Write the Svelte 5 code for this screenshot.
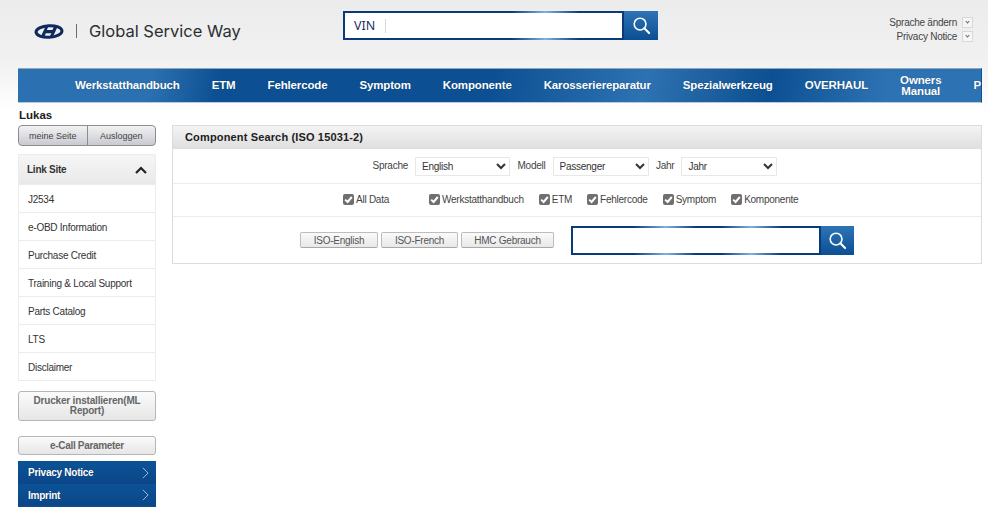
<script>
	const navItems = [
		['Werkstatthandbuch'],
		['ETM'],
		['Fehlercode'],
		['Symptom'],
		['Komponente'],
		['Karosseriereparatur'],
		['Spezialwerkzeug'],
		['OVERHAUL'],
		['Owners', 'Manual'],
		['P']
	];
	const links = [
		'J2534',
		'e-OBD Information',
		'Purchase Credit',
		'Training & Local Support',
		'Parts Catalog',
		'LTS',
		'Disclaimer'
	];
	const checks = [
		{ label: 'All Data', wide: true },
		{ label: 'Werkstatthandbuch' },
		{ label: 'ETM' },
		{ label: 'Fehlercode' },
		{ label: 'Symptom' },
		{ label: 'Komponente' }
	];
</script>

{#snippet searchIcon()}
	<svg viewBox="0 0 20 20" width="19" height="19" fill="none" stroke="#fff" aria-hidden="true">
		<circle cx="8.5" cy="8.5" r="6.2" stroke-width="1.7" />
		<path d="M13 13l5 5" stroke-width="2.2" stroke-linecap="round" />
	</svg>
{/snippet}

<div class="page">
	<header class="top">
		<div class="brand">
			<svg class="logo" viewBox="0 0 30 15" width="30" height="15" aria-hidden="true">
				<ellipse cx="15" cy="7.5" rx="13" ry="5.8" fill="none" stroke="#0f2a5e" stroke-width="3" transform="rotate(-3 15 7.5)" />
				<path d="M12 1.6l-5.6 11.8 3.4.5 2-4.6h5.6l-2.4 4.7 3.6-.6 5.4-11.6-3.5-.4-2.1 4.7h-5.6l2.2-4.9z" fill="#0f2a5e" />
			</svg>
			<span class="divider"></span>
			<span class="brand-name">Global Service Way</span>
		</div>
		<div class="vin-search">
			<div class="vin-field">
				<span class="vin-label">VIN</span>
			</div>
			<button class="search-btn vin-btn" aria-label="Search">{@render searchIcon()}</button>
		</div>
		<div class="utils">
			<div class="util">Sprache ändern <span class="caret"><i></i></span></div>
			<div class="util">Privacy Notice <span class="caret"><i></i></span></div>
		</div>
	</header>

	<nav class="gnb">
		{#each navItems as item}
			<a href="#top" class="gnb-item">
				{#each item as line}<span>{line}</span>{/each}
			</a>
		{/each}
	</nav>

	<div class="content">
		<aside class="side">
			<div class="user">Lukas</div>
			<div class="user-btns">
				<button>meine Seite</button>
				<button>Ausloggen</button>
			</div>

			<section class="links">
				<div class="links-head">
					<span>Link Site</span>
					<svg viewBox="0 0 12 8" width="12" height="8" fill="none" stroke="#222" stroke-width="2.2" aria-hidden="true"><path d="M1 7l5-5 5 5" /></svg>
				</div>
				{#each links as link}
					<a href="#top" class="link-row">{link}</a>
				{/each}
			</section>

			<button class="side-btn printer">Drucker installieren(ML Report)</button>
			<button class="side-btn ecall">e-Call Parameter</button>

			<div class="blue-links">
				<a href="#top">Privacy Notice
					<svg viewBox="0 0 8 14" width="7" height="12" fill="none" stroke="#b8d0e8" aria-hidden="true"><path d="M1 1l6 6-6 6" /></svg>
				</a>
				<a href="#top">Imprint
					<svg viewBox="0 0 8 14" width="7" height="12" fill="none" stroke="#b8d0e8" aria-hidden="true"><path d="M1 1l6 6-6 6" /></svg>
				</a>
			</div>
		</aside>

		<main class="panel">
			<h2>Component Search (ISO 15031-2)</h2>

			<div class="row filters">
				<label><span>Sprache</span>
					<select class="w95"><option>English</option></select>
				</label>
				<label><span>Modell</span>
					<select class="w96"><option>Passenger</option></select>
				</label>
				<label><span>Jahr</span>
					<select class="w96"><option>Jahr</option></select>
				</label>
			</div>

			<div class="row checks">
				{#each checks as check}
					<label class="check" class:wide={check.wide}>
						<span class="box">
							<svg viewBox="0 0 11 11" width="11" height="11" fill="none" stroke="#fff" stroke-width="2" aria-hidden="true"><path d="M2.2 5.6l2.4 2.4 4.2-5" /></svg>
						</span>
						{check.label}
					</label>
				{/each}
			</div>

			<div class="row actions">
				<div class="iso-btns">
					<button class="w78">ISO-English</button>
					<button class="w77">ISO-French</button>
					<button class="w93">HMC Gebrauch</button>
				</div>
				<div class="term-search">
					<div class="term-field"></div>
					<button class="search-btn term-btn" aria-label="Search">{@render searchIcon()}</button>
				</div>
			</div>
		</main>
	</div>
</div>

<style>
	:global(body) {
		margin: 0;
		background: #fff;
	}

	.page {
		width: 988px;
		height: 520px;
		overflow: hidden;
		font-family: "Liberation Sans", Arial, sans-serif;
		font-size: 10px;
		letter-spacing: -0.25px;
		color: #333;
		background: linear-gradient(#ececec 0, #f1f1f1 60px, #fff 112px) no-repeat;
	}

	button {
		font-family: inherit;
		letter-spacing: inherit;
		cursor: pointer;
	}

	/* header */
	.top {
		display: grid;
		grid-template-columns: 343px 315px 1fr;
		height: 68px;
		box-sizing: border-box;
	}

	.brand {
		display: flex;
		align-items: center;
		height: 62px;
		padding-left: 34px;
	}

	.logo {
		flex: none;
	}

	.divider {
		width: 1px;
		height: 14px;
		margin: 0 12px 0 12px;
		background: #5f7284;
	}

	.brand-name {
		font-family: Inter, "Noto Sans", sans-serif;
		font-size: 16.5px;
		letter-spacing: 0;
		color: #2b2f33;
		white-space: nowrap;
	}

	.vin-search {
		display: flex;
		height: 29px;
		margin-top: 11px;
	}

	.vin-field {
		flex: 1;
		display: flex;
		align-items: center;
		box-sizing: border-box;
		border: 2px solid #0b3f80;
		border-image: linear-gradient(90deg, #0b3a7c 0, #0b3a7c 60%, #7fb2e0 72%, #0b3a7c 84%) 2;
		background: #fff;
		padding-left: 9px;
	}

	.vin-label {
		padding-right: 10px;
		border-right: 1px solid #d8d8d8;
		font-family: "Noto Sans", sans-serif;
		font-size: 12.5px;
		letter-spacing: 0;
		line-height: 14px;
		color: #1b2f66;
	}

	.search-btn {
		display: flex;
		align-items: center;
		justify-content: center;
		flex: none;
		padding: 0;
		border: 0;
		background: linear-gradient(#2d74b6, #0b4f92);
	}

	.vin-btn {
		width: 34px;
	}

	.utils {
		padding: 15px 15px 0 0;
		text-align: right;
		color: #444;
	}

	.util {
		display: flex;
		align-items: center;
		justify-content: flex-end;
		gap: 5px;
		height: 14.5px;
	}

	.caret {
		display: flex;
		align-items: center;
		justify-content: center;
		width: 9px;
		height: 9px;
		border: 1px solid #d9d9d9;
		background: #f6f6f6;
	}

	.caret i {
		width: 2px;
		height: 2px;
		margin-top: -2px;
		border-right: 1px solid #666;
		border-bottom: 1px solid #666;
		transform: rotate(45deg);
	}

	/* main menu */
	.gnb {
		display: flex;
		align-items: center;
		gap: 32px;
		height: 35px;
		margin: 0 6px 0 18px;
		padding-left: 57px;
		overflow: hidden;
		white-space: nowrap;
		border-top: 1px solid #8fa6bd;
		border-bottom: 1px solid #b7cbdd;
		border-right: 1px solid #0c5093;
		box-sizing: border-box;
		background: linear-gradient(100deg, #2b70b0 0, #2b70b0 14%, #0c5093 21%, #0c5093 49%, #2d72b2 65%, #1d5f9f 72%, #0c5093 78%, #2d72b2 90%, #2d72b2 100%);
	}

	.gnb-item {
		display: flex;
		flex-direction: column;
		align-items: center;
		flex: none;
		color: #fff;
		font-size: 11.5px;
		font-weight: 700;
		line-height: 11px;
		letter-spacing: -0.145px;
		text-decoration: none;
		text-shadow: 0 0 1px rgba(0, 0, 0, 0.35);
	}

	/* body */
	.content {
		display: grid;
		grid-template-columns: 138px 810px;
		gap: 16px;
		padding-left: 18px;
	}

	.side {
		display: flex;
		flex-direction: column;
	}

	.user {
		height: 22px;
		padding-left: 1px;
		font-size: 11.5px;
		font-weight: 700;
		letter-spacing: 0;
		line-height: 24px;
		color: #1c1c1c;
	}

	.user-btns {
		display: flex;
		height: 21px;
		box-sizing: border-box;
		border: 1px solid #8b8d92;
		border-radius: 4px;
		overflow: hidden;
		background: linear-gradient(#f2f2f4, #c9cad0);
	}

	.user-btns button {
		flex: 1;
		padding: 0;
		border: 0;
		background: none;
		font-size: 9px;
		letter-spacing: 0;
		color: #444;
	}

	.user-btns button + button {
		border-left: 1px solid #8b8d92;
	}

	.links {
		margin-top: 8px;
		border: 1px solid #ececec;
		background: #fff;
	}

	.links-head {
		display: flex;
		align-items: center;
		justify-content: space-between;
		height: 29px;
		padding: 0 8px;
		background: linear-gradient(#f6f6f6, #e9e9eb);
		font-weight: 700;
		color: #333;
	}

	.link-row {
		display: flex;
		align-items: center;
		height: 26px;
		padding: 1px 0 0 9px;
		border-top: 1px solid #ececec;
		color: #333;
		text-decoration: none;
	}

	.side-btn {
		box-sizing: border-box;
		width: 138px;
		padding: 0 4px;
		border: 1px solid #b5b5b5;
		border-radius: 3px;
		background: linear-gradient(#fbfbfb, #e6e6e6);
		font-size: 10px;
		font-weight: 700;
		letter-spacing: -0.18px;
		line-height: 10px;
		color: #666;
	}

	.printer {
		height: 30px;
		margin-top: 10px;
	}

	.ecall {
		height: 19px;
		margin-top: 15px;
		letter-spacing: -0.32px;
	}

	.blue-links {
		margin-top: 6px;
		border: 1px solid #0b4f92;
		border-width: 1px 0;
	}

	.blue-links a {
		display: flex;
		align-items: center;
		justify-content: space-between;
		box-sizing: border-box;
		height: 22px;
		padding: 0 7px 1px 10px;
		background: linear-gradient(#0c5297, #0a4688);
		color: #fff;
		font-weight: 700;
		text-decoration: none;
		text-shadow: 0 0 1px rgba(0, 0, 0, 0.4);
	}

	.blue-links a + a {
		padding-bottom: 0;
	}

	.panel {
		align-self: start;
		height: 139px;
		margin-top: 22px;
		box-sizing: border-box;
		border: 1px solid #dcdcdc;
		background: #fff;
	}

	.panel h2 {
		margin: 0;
		height: 23px;
		padding-left: 12px;
		background: linear-gradient(#f4f4f4, #dedede);
		font-size: 11px;
		font-weight: 700;
		line-height: 23px;
		letter-spacing: 0.15px;
		color: #1c1c1c;
	}

	.row {
		display: flex;
		align-items: center;
		justify-content: center;
		box-sizing: border-box;
		border-top: 1px solid #ececec;
	}

	.filters {
		height: 34px;
		gap: 7.5px;
		border-top: 0;
		padding-right: 4px;
	}

	.filters label {
		display: flex;
		align-items: center;
		gap: 7px;
		color: #444;
	}

	.filters label span {
		margin-top: -2px;
	}

	.filters select {
		height: 19px;
		box-sizing: border-box;
		border: 1px solid #e8e8e8;
		border-radius: 0;
		background: #fff;
		padding: 0 0 0 2px;
		font-family: inherit;
		font-size: 10px;
		letter-spacing: -0.25px;
		color: #333;
	}

	.w95 {
		width: 95px;
	}

	.w96 {
		width: 96px;
	}

	.checks {
		height: 33px;
		justify-content: flex-start;
		gap: 15px;
		padding: 0 0 2px 170px;
	}

	.check {
		display: flex;
		align-items: center;
		gap: 2px;
		color: #444;
	}

	.check.wide {
		margin-right: 25px;
	}

	.box {
		display: flex;
		align-items: center;
		justify-content: center;
		width: 11px;
		height: 11px;
		border-radius: 2px;
		background: #6f6f6f;
	}

	.actions {
		height: 47px;
		justify-content: flex-start;
		gap: 17px;
		padding-left: 127px;
	}

	.iso-btns {
		display: flex;
		gap: 3px;
	}

	.iso-btns button {
		height: 16px;
		padding: 0;
		border: 1px solid #bdbdbd;
		border-bottom-color: #a8a8a8;
		border-radius: 2px;
		background: linear-gradient(#fafafa, #e8e8e8);
		font-size: 10px;
		color: #555;
	}

	.w78 {
		width: 78px;
	}

	.w77 {
		width: 77px;
	}

	.w93 {
		width: 93px;
	}

	.term-search {
		display: flex;
		width: 283px;
		height: 29px;
	}

	.term-field {
		flex: 1;
		box-sizing: border-box;
		border: 2px solid #0b3f80;
		border-image: linear-gradient(90deg, #0b3a7c 0, #0b3a7c 25%, #7fb2e0 38%, #0b3a7c 50%, #0b3a7c 60%, #7fb2e0 72%, #0b3a7c 84%) 2;
		background: #fff;
	}

	.term-btn {
		width: 33px;
	}
</style>
